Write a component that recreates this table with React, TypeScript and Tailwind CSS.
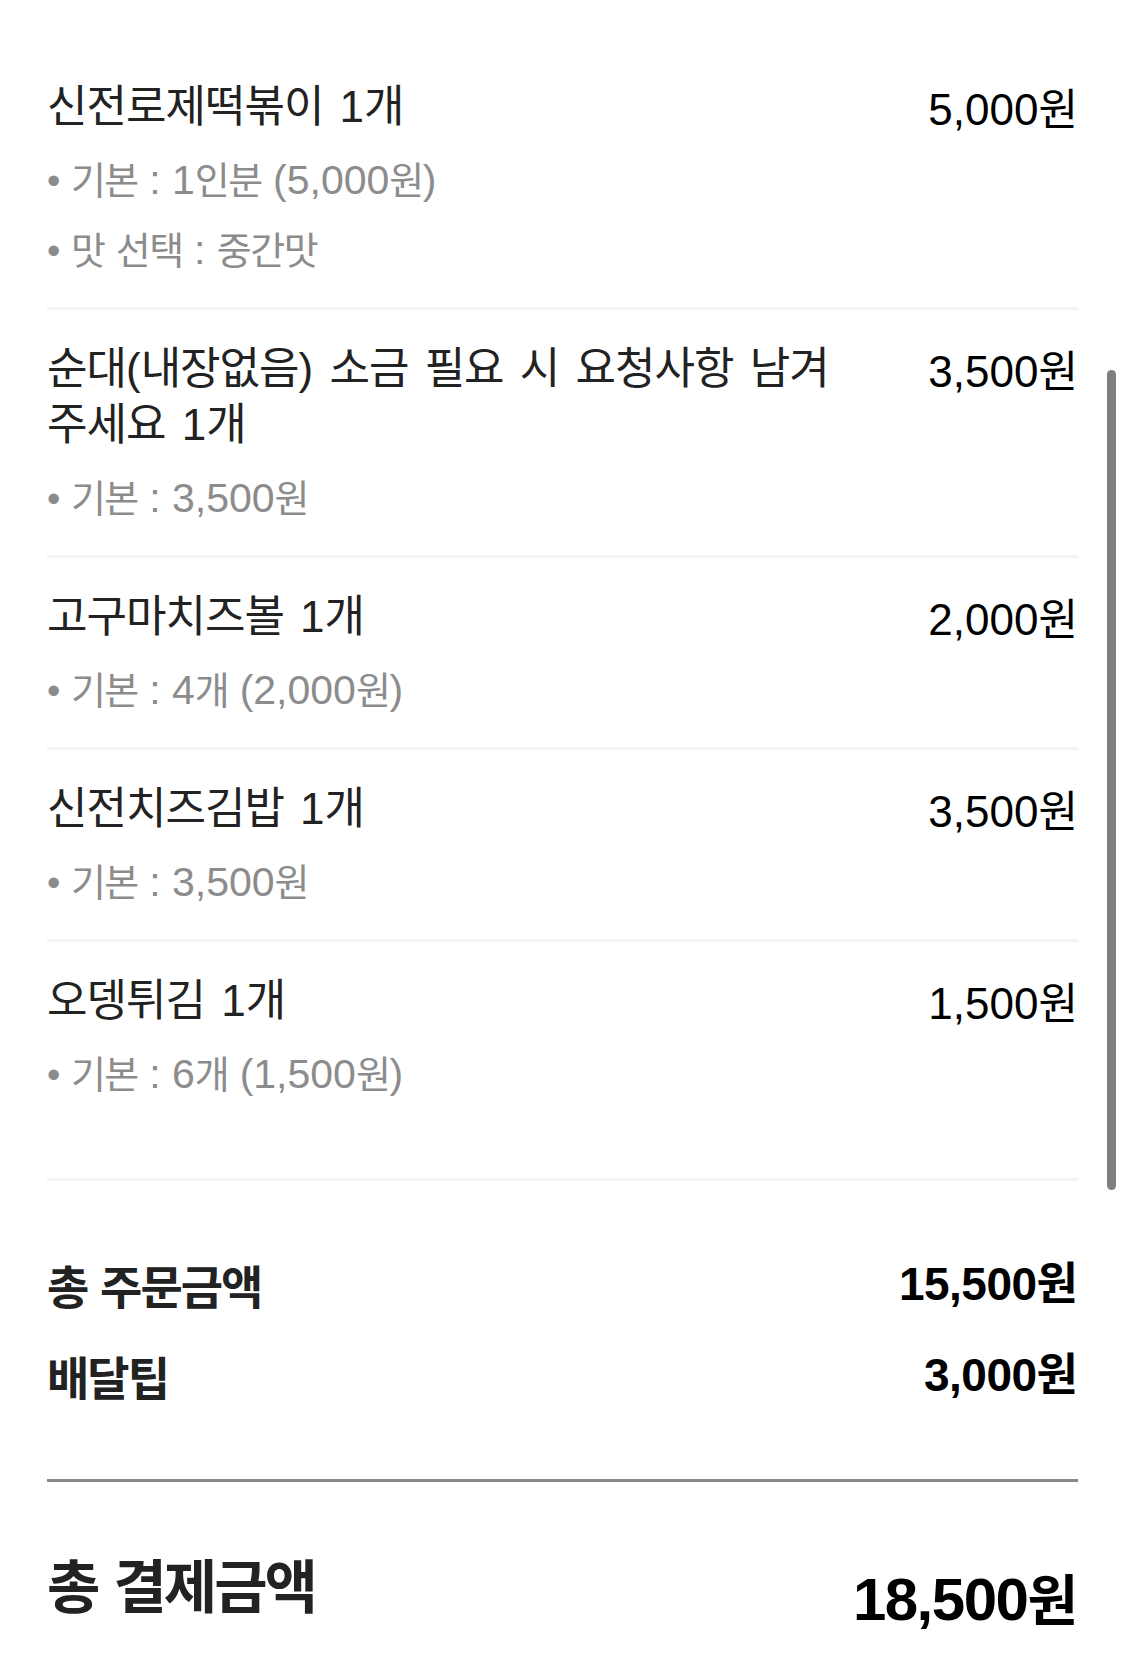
import React from "react";

const HANGUL = /([\uAC00-\uD7A3\u3131-\u318E]+)/;

function Mixed({ text, ko, la }: { text: string; ko: string; la: string }) {
  const parts = text.split(HANGUL).filter((p) => p.length > 0);
  return (
    <>
      {parts.map((p, i) =>
        /[\uAC00-\uD7A3\u3131-\u318E]/.test(p) ? (
          <span key={i} className={ko}>
            {p}
          </span>
        ) : (
          <span key={i} className={la}>
            {p}
          </span>
        )
      )}
    </>
  );
}

const KO = "font-['Noto_Sans_CJK_KR',sans-serif] leading-[0px]";
const LA = "font-['Liberation_Sans','Noto_Sans_CJK_KR',sans-serif] leading-[0px]";

const titleKo = `${KO} text-[44px] tracking-[-1px]`;
const titleLa = `${LA} text-[44px] [word-spacing:4px]`;
const subKo = `${KO} text-[38px] tracking-[-1.5px]`;
const subLa = `${LA} text-[41px]`;
const priceKo = `${KO} text-[43px]`;
const priceLa = `${LA} text-[44px]`;

type Item = { title: string; price: string; subs: string[] };

const items: Item[] = [
  { title: "신전로제떡볶이 1개", price: "5,000원", subs: ["기본 : 1인분 (5,000원)", "맛 선택 : 중간맛"] },
  { title: "순대(내장없음) 소금 필요 시 요청사항 남겨 주세요 1개", price: "3,500원", subs: ["기본 : 3,500원"] },
  { title: "고구마치즈볼 1개", price: "2,000원", subs: ["기본 : 4개 (2,000원)"] },
  { title: "신전치즈김밥 1개", price: "3,500원", subs: ["기본 : 3,500원"] },
  { title: "오뎅튀김 1개", price: "1,500원", subs: ["기본 : 6개 (1,500원)"] },
];

function OrderItem({ item, last }: { item: Item; last: boolean }) {
  return (
    <div
      className={`border-b-[3px] border-[#f4f4f4] pt-[28px] ${last ? "pb-[71px]" : "pb-[24px]"}`}
    >
      <div className="flex items-start justify-between">
        <div className="min-w-0 flex-1 break-keep pr-[30px] font-['Noto_Sans_CJK_KR',sans-serif] text-[42px] leading-[56px] text-[#222222]">
          <Mixed text={item.title} ko={titleKo} la={titleLa} />
        </div>
        <div className="shrink-0 whitespace-nowrap pt-[12px] font-['Liberation_Sans',sans-serif] text-[44px] leading-[44px] text-black">
          <Mixed text={item.price} ko={priceKo} la={priceLa} />
        </div>
      </div>
      <div className="mt-[11px] flex flex-col">
        {item.subs.map((s, i) => (
          <div
            key={i}
            className="font-['Noto_Sans_CJK_KR',sans-serif] text-[37px] leading-[70px] text-[#8c8c8c]"
          >
            <span className={`${LA} text-[38px]`}>• </span>
            <Mixed text={s} ko={subKo} la={subLa} />
          </div>
        ))}
      </div>
    </div>
  );
}

const sumKo = `${KO} text-[46px] font-bold tracking-[-2px]`;
const sumLa = `${LA} text-[46px] font-bold`;
const amtKo = `${KO} text-[45px] font-bold`;
const amtLa = `${LA} text-[46px] font-bold tracking-[-0.5px]`;
const bigKo = `${KO} text-[58px] font-bold tracking-[-3px]`;
const bigLa = `${LA} text-[58px] font-bold`;
const bigAmtKo = `${KO} text-[55px] font-bold`;
const bigAmtLa = `${LA} text-[60px] font-bold tracking-[-1.5px]`;

export default function App() {
  return (
    <div className="relative min-h-[1660px] w-full bg-white">
      <div className="px-[47px] pt-[48px]">
        {items.map((it, i) => (
          <OrderItem key={i} item={it} last={i === items.length - 1} />
        ))}

        <div className="flex flex-col gap-[31px] pt-[73px] pb-[74px]">
          <div className="flex items-start justify-between">
            <div className="font-['Noto_Sans_CJK_KR',sans-serif] text-[46px] font-bold leading-[60px] text-[#222222]">
              <Mixed text="총 주문금액" ko={sumKo} la={sumLa} />
            </div>
            <div className="font-['Liberation_Sans',sans-serif] text-[46px] font-bold leading-[60px] text-black">
              <Mixed text="15,500원" ko={amtKo} la={amtLa} />
            </div>
          </div>
          <div className="flex items-start justify-between">
            <div className="font-['Noto_Sans_CJK_KR',sans-serif] text-[46px] font-bold leading-[60px] text-[#222222]">
              <Mixed text="배달팁" ko={sumKo} la={sumLa} />
            </div>
            <div className="font-['Liberation_Sans',sans-serif] text-[46px] font-bold leading-[60px] text-black">
              <Mixed text="3,000원" ko={amtKo} la={amtLa} />
            </div>
          </div>
        </div>

        <div className="border-t-[3px] border-[#888888] pt-[66px]">
          <div className="flex items-start justify-between">
            <div className="font-['Noto_Sans_CJK_KR',sans-serif] text-[58px] font-bold leading-[70px] text-[#222222]">
              <Mixed text="총 결제금액" ko={bigKo} la={bigLa} />
            </div>
            <div className="mt-[17px] font-['Liberation_Sans',sans-serif] text-[60px] font-bold leading-[70px] text-black">
              <Mixed text="18,500원" ko={bigAmtKo} la={bigAmtLa} />
            </div>
          </div>
        </div>
      </div>

      <div className="absolute right-[9px] top-[370px] h-[820px] w-[9px] rounded-full bg-[#7f7f7f]" />
    </div>
  );
}
